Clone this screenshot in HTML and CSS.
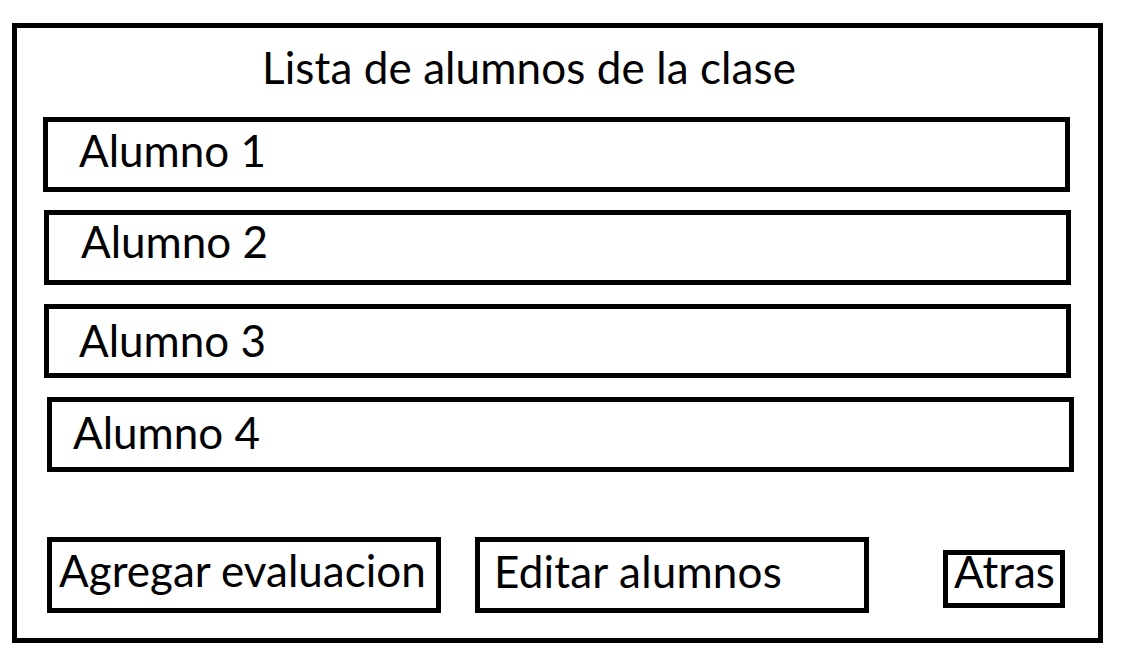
FILE: index.html
```html
<!DOCTYPE html>
<html lang="es">
<head>
<meta charset="utf-8">
<title>Lista de alumnos de la clase</title>
<link rel="stylesheet" href="styles.css">
</head>
<body>
<div class="frame">
  <h1 class="title">Lista de alumnos de la clase</h1>
  <ul class="list">
    <li class="row row-1">Alumno 1</li>
    <li class="row row-2">Alumno 2</li>
    <li class="row row-3">Alumno 3</li>
    <li class="row row-4">Alumno 4</li>
  </ul>
  <div class="actions">
    <div class="btn btn-add">Agregar evaluacion</div>
    <div class="btn btn-edit">Editar alumnos</div>
    <div class="btn btn-back">Atras</div>
  </div>
</div>
</body>
</html>
```

FILE: styles.css
```css
html, body {
  margin: 0;
  padding: 0;
  background: #fff;
}

body {
  font-family: Lato, "Open Sans", "Liberation Sans", sans-serif;
  font-size: 44px;
  color: #000;
}

.frame {
  box-sizing: border-box;
  width: 1091px;
  height: 620px;
  margin: 23px 0 0 12px;
  border: 5px solid #000;
}

.title {
  margin: 13px 0 0 0;
  padding-left: 245px;
  font-size: 44px;
  font-weight: normal;
  line-height: 52px;
  letter-spacing: 0.1px;
}

.list {
  list-style: none;
  margin: 24px 0 0 0;
  padding: 0;
  display: flex;
  flex-direction: column;
}

.row {
  box-sizing: border-box;
  width: 1027px;
  height: 75px;
  border: 5px solid #000;
  line-height: 52px;
}

.row-1 { margin-left: 26px; padding: 2px 0 0 31px; }
.row-2 { margin-left: 27px; margin-top: 18px; padding: 0 0 0 32px; }
.row-3 { margin-left: 27px; margin-top: 19px; height: 74px; padding: 5px 0 0 30px; }
.row-4 { margin-left: 30px; margin-top: 19px; padding: 4px 0 0 21px; }

.actions {
  display: flex;
  align-items: flex-start;
  margin-top: 65px;
  padding-left: 30px;
}

.btn {
  box-sizing: border-box;
  border: 5px solid #000;
  white-space: nowrap;
}

.btn-add {
  width: 394px;
  height: 76px;
  padding: 2px 0 0 7px;
  line-height: 52px;
}

.btn-edit {
  width: 394px;
  height: 76px;
  margin-left: 34px;
  padding: 3px 0 0 14px;
  line-height: 52px;
  letter-spacing: 0.2px;
}

.btn-back {
  width: 122px;
  height: 58px;
  margin-left: 74px;
  margin-top: 13px;
  padding: 0 0 0 6px;
  line-height: 33px;
}
```
